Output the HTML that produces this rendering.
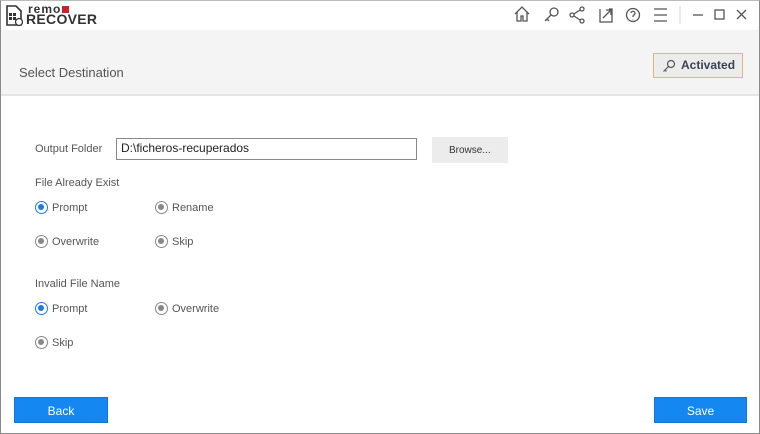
<!DOCTYPE html>
<html><head><meta charset="utf-8"><style>
*{margin:0;padding:0;box-sizing:border-box}
body{width:760px;height:434px;overflow:hidden;background:#fff;font-family:"Liberation Sans",sans-serif;position:relative;color:#444}
.frame{position:absolute;left:0;top:0;width:760px;height:434px;border:1px solid #8a8a8a;border-top:1px solid #bbb}
.band{position:absolute;left:1px;right:1px;top:30px;height:66px;background:#f4f4f4;border-bottom:2px solid #e6e6e6}
.t{position:absolute;white-space:nowrap}
.lbl{font-size:11px;color:#555}
.radio{position:absolute;width:13px;height:13px;border-radius:50%;border:1.5px solid #888;background:#fff}
.radio::after{content:"";position:absolute;left:2px;top:2px;width:6px;height:6px;border-radius:50%;background:#888}
.radio.on{border-color:#1a7be6}
.radio.on::after{background:#1a7be6}
.rl{position:absolute;font-size:11px;color:#555}
.btn{position:absolute;background:#1488f0;color:#fff;font-size:12px;text-align:center;line-height:26px;height:26px;border:1px solid #0a78dc}
svg{position:absolute}
</style></head><body>
<div class="frame"></div>
<svg style="left:5px;top:5px" width="18" height="22" viewBox="0 0 18 22"><path d="M2 1h9l5 5v14H2z" fill="none" stroke="#333" stroke-width="1.6"/><rect x="4" y="8" width="3" height="3" fill="#333"/><rect x="8" y="8" width="3" height="3" fill="#333"/><rect x="4" y="12" width="3" height="3" fill="#333"/><rect x="8" y="12" width="3" height="3" fill="#333"/><circle cx="14" cy="17" r="3.5" fill="#fff" stroke="#333" stroke-width="1.3"/></svg>
<div class="t" style="left:28px;top:2px;font-size:12px;font-weight:bold;color:#333;letter-spacing:1px">remo</div>
<div style="position:absolute;left:62px;top:6px;width:7px;height:7px;background:#c0262a"></div>
<div class="t" style="left:26px;top:11px;font-size:14px;font-weight:bold;color:#333;letter-spacing:0.3px">RECOVER</div>
<svg style="left:512px;top:4px" width="240" height="22" viewBox="0 0 240 22" fill="none" stroke="#555" stroke-width="1.3">
<path d="M3 10l7-7 7 7M5 8v9h4v-5h2v5h4V8"/>
<circle cx="42" cy="8" r="4"/><path d="M39 11l-6 6M35 15l2 2"/>
<circle cx="60" cy="11" r="2"/><circle cx="70" cy="5" r="2"/><circle cx="70" cy="17" r="2"/><path d="M62 10l6-4M62 12l6 4"/>
<path d="M88 5v13h12V5h-3M91 14l8-8M94 6h5v5"/>
<circle cx="121" cy="11" r="6.5"/><path d="M119 9a2 2 0 1 1 3 2c-1 .5-1 1-1 2M121 15v.5"/>
<path d="M142 5h13M142 11h13M142 17h13"/>
<path d="M168 2v18" stroke="#ddd"/>
<path d="M181 11h10"/><rect x="203" y="6" width="9" height="9"/><path d="M225 6l9 9M234 6l-9 9"/>
</svg>
<div class="band"></div>
<div class="t" style="left:19px;top:65px;font-size:13px;color:#555">Select Destination</div>
<div style="position:absolute;left:653px;top:53px;width:90px;height:25px;background:#ececec;border:1.5px solid #e0b878;"></div>
<svg style="left:661px;top:58px" width="16" height="16" viewBox="0 0 16 16" fill="none" stroke="#555" stroke-width="1.2"><circle cx="10" cy="6" r="3.5"/><path d="M7.5 8.5l-5 5M4 12l1.5 1.5"/></svg>
<div class="t" style="left:681px;top:58px;font-size:12px;font-weight:bold;color:#3a4450">Activated</div>
<div class="t lbl" style="left:35px;top:143px">Output Folder</div>
<div style="position:absolute;left:116px;top:138px;width:301px;height:22px;border:1px solid #888;background:#fff"></div>
<div class="t" style="left:121px;top:141px;font-size:12px;color:#222">D:\ficheros-recuperados</div>
<div style="position:absolute;left:432px;top:137px;width:76px;height:26px;background:#ececec"></div>
<div class="t" style="left:449px;top:145px;font-size:10px;color:#333">Browse...</div>
<div class="t lbl" style="left:35px;top:177px">File Already Exist</div>
<div class="radio on" style="left:35px;top:201px"></div><div class="rl" style="left:52px;top:202px">Prompt</div>
<div class="radio" style="left:155px;top:201px"></div><div class="rl" style="left:172px;top:202px">Rename</div>
<div class="radio" style="left:35px;top:235px"></div><div class="rl" style="left:52px;top:236px">Overwrite</div>
<div class="radio" style="left:155px;top:235px"></div><div class="rl" style="left:172px;top:236px">Skip</div>
<div class="t lbl" style="left:35px;top:278px">Invalid File Name</div>
<div class="radio on" style="left:35px;top:302px"></div><div class="rl" style="left:52px;top:303px">Prompt</div>
<div class="radio" style="left:155px;top:302px"></div><div class="rl" style="left:172px;top:303px">Overwrite</div>
<div class="radio" style="left:35px;top:336px"></div><div class="rl" style="left:52px;top:337px">Skip</div>
<div class="btn" style="left:14px;top:397px;width:94px">Back</div>
<div class="btn" style="left:654px;top:397px;width:93px">Save</div>
</body></html>
